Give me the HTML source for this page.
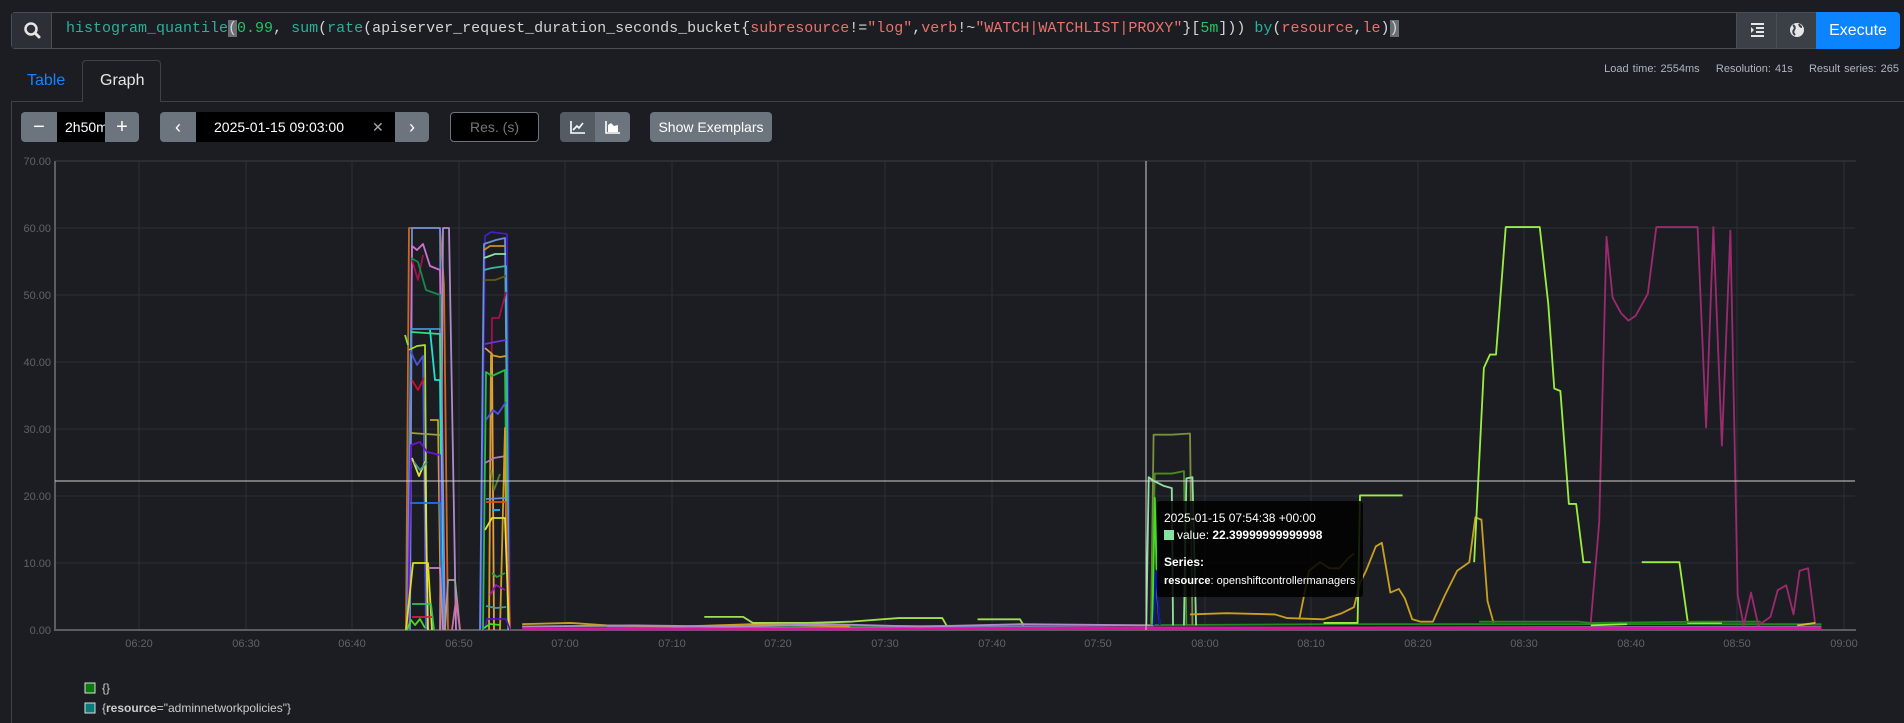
<!DOCTYPE html>
<html><head><meta charset="utf-8"><style>
*{box-sizing:border-box;margin:0;padding:0}
body{width:1904px;height:723px;background:#1b1d22;font-family:"Liberation Sans",sans-serif;overflow:hidden;position:relative;color:#e6e6e6}
.abs{position:absolute}
.q{left:11px;top:12px;width:1888px;height:37px;border:1px solid #4a4e55;border-radius:4px;background:#1b1d22}
.srch{left:0;top:0;width:40px;height:35px;background:#2c2f35;border-right:1px solid #4a4e55}
.qt{left:54px;top:7px;font-family:"Liberation Mono",monospace;font-size:15px;white-space:pre;color:#d4d4d4}
.f{color:#2bb09a}.n{color:#22c55e}.l{color:#e8736c}.cur{background:#6a6e75}
.btn{background:#6c757d;color:#fff;font-size:14px;display:flex;align-items:center;justify-content:center}
.tab{font-size:16px}
.ctl{top:112px;height:30px}
</style></head><body>
<div class="abs q">
 <div class="abs srch"><svg width="40" height="35"><circle cx="19" cy="16" r="5.5" fill="none" stroke="#e6e6e6" stroke-width="2.5"/><line x1="23" y1="20" x2="27" y2="24" stroke="#e6e6e6" stroke-width="3" stroke-linecap="round"/></svg></div>
 <div class="abs qt"><span class="f">histogram_quantile</span><span class="cur">(</span><span class="n">0.99</span>, <span class="f">sum</span>(<span class="f">rate</span>(apiserver_request_duration_seconds_bucket{<span class="l">subresource</span>!=<span class="l">"log"</span>,<span class="l">verb</span>!~<span class="l">"WATCH|WATCHLIST|PROXY"</span>}[<span class="n">5m</span>])) <span class="f">by</span>(<span class="l">resource</span>,<span class="l">le</span>)<span class="cur">)</span></div>
 <div class="abs" style="left:1724px;top:0;width:40px;height:35px;background:#3b3f46;border-left:1px solid #4a4e55"><svg width="40" height="35"><g stroke="#e6e6e6" stroke-width="2"><line x1="14" y1="11" x2="27" y2="11"/><line x1="19" y1="15" x2="27" y2="15"/><line x1="19" y1="19" x2="27" y2="19"/><line x1="14" y1="23" x2="27" y2="23"/></g><path d="M14 14 L17 17 L14 20Z" fill="#e6e6e6"/></svg></div>
 <div class="abs" style="left:1764px;top:0;width:40px;height:35px;background:#3b3f46;border-left:1px solid #4a4e55"><svg width="40" height="35"><circle cx="20" cy="17" r="7" fill="#e6e6e6"/><path d="M16 12 q3 2 1 5 q-2 2 1 5 M22 11 q1 3 3 3" stroke="#3b3f46" stroke-width="2" fill="none"/></svg></div>
 <div class="abs btn" style="left:1804px;top:-1px;width:84px;height:37px;background:#0b84ff;border-radius:0 4px 4px 0;font-size:16px">Execute</div>
</div>
<div class="abs tab" style="left:27px;top:72px;color:#1a82f7">Table</div>
<div class="abs" style="left:82px;top:60px;width:79px;height:42px;border:1px solid #3e4248;border-bottom:none;border-radius:4px 4px 0 0;background:#1b1d22;z-index:2"></div>
<div class="abs tab" style="left:100px;top:72px;color:#e6e6e6;z-index:3">Graph</div>
<div class="abs" style="left:11px;top:101px;width:1893px;height:1px;background:#3e4248"></div>
<div class="abs" style="left:11px;top:101px;width:1px;height:622px;background:#3e4248"></div>
<div class="abs" style="right:5px;top:63px;font-size:11px;color:#adb5bd;word-spacing:1px">Load time: 2554ms &nbsp;&nbsp; Resolution: 41s &nbsp;&nbsp; Result series: 265</div>

<div class="abs ctl btn" style="left:21px;width:36px;border-radius:4px 0 0 4px;font-size:20px">−</div>
<div class="abs ctl" style="left:57px;width:48px;background:#000;color:#fff;font-size:14px;padding:7px 0 0 8px;overflow:hidden">2h50m</div>
<div class="abs ctl btn" style="left:105px;width:34px;border-radius:0 4px 4px 0;font-size:20px">+</div>
<div class="abs ctl btn" style="left:160px;width:36px;border-radius:4px 0 0 4px;font-size:18px">‹</div>
<div class="abs ctl" style="left:196px;width:199px;background:#000;color:#fff;font-size:14px;padding:7px 0 0 18px">2025-01-15 09:03:00<span style="position:absolute;left:176px;color:#aaa">✕</span></div>
<div class="abs ctl btn" style="left:395px;width:34px;border-radius:0 4px 4px 0;font-size:18px">›</div>
<div class="abs ctl" style="left:450px;width:89px;background:#000;border:1px solid #6c757d;border-radius:4px;color:#777;font-size:14px;text-align:center;padding-top:6px">Res. (s)</div>
<div class="abs ctl btn" style="left:560px;width:35px;background:#545b62;border-radius:4px 0 0 4px"><svg width="16" height="14"><path d="M1 1V13H15" stroke="#fff" stroke-width="1.6" fill="none"/><path d="M3 10 L7 6 L9 8 L13 3" stroke="#fff" stroke-width="1.6" fill="none"/></svg></div>
<div class="abs ctl btn" style="left:595px;width:35px;border-radius:0 4px 4px 0"><svg width="16" height="14"><path d="M1 1V13H15" stroke="#fff" stroke-width="1.6" fill="none"/><path d="M3 12V5L6 3L9 6L13 5V12Z" fill="#fff"/></svg></div>
<div class="abs ctl btn" style="left:650px;width:122px;border-radius:4px">Show Exemplars</div>

<svg class="abs" style="left:0;top:0" width="1904" height="723">
 <g stroke="#2b2e34" stroke-width="1">
  <line x1="55" y1="228" x2="1855" y2="228"/><line x1="55" y1="295" x2="1855" y2="295"/><line x1="55" y1="362" x2="1855" y2="362"/><line x1="55" y1="429" x2="1855" y2="429"/><line x1="55" y1="496" x2="1855" y2="496"/><line x1="55" y1="563" x2="1855" y2="563"/>
  <line x1="139" y1="161" x2="139" y2="630"/><line x1="246" y1="161" x2="246" y2="630"/><line x1="352" y1="161" x2="352" y2="630"/><line x1="459" y1="161" x2="459" y2="630"/><line x1="565" y1="161" x2="565" y2="630"/><line x1="672" y1="161" x2="672" y2="630"/><line x1="778" y1="161" x2="778" y2="630"/><line x1="885" y1="161" x2="885" y2="630"/><line x1="992" y1="161" x2="992" y2="630"/><line x1="1098" y1="161" x2="1098" y2="630"/><line x1="1205" y1="161" x2="1205" y2="630"/><line x1="1311" y1="161" x2="1311" y2="630"/><line x1="1418" y1="161" x2="1418" y2="630"/><line x1="1524" y1="161" x2="1524" y2="630"/><line x1="1631" y1="161" x2="1631" y2="630"/><line x1="1737" y1="161" x2="1737" y2="630"/><line x1="1844" y1="161" x2="1844" y2="630"/>
 </g>
 <path d="M55 161V630H1856" stroke="#5a5d62" stroke-width="2" fill="none"/>
 <line x1="55" y1="161" x2="1856" y2="161" stroke="#3a3d42" stroke-width="1"/>
 <g font-family="Liberation Sans" font-size="11" fill="#5f6368" text-anchor="end">
  <text x="51" y="165">70.00</text><text x="51" y="232">60.00</text><text x="51" y="299">50.00</text><text x="51" y="366">40.00</text><text x="51" y="433">30.00</text><text x="51" y="500">20.00</text><text x="51" y="567">10.00</text><text x="51" y="634">0.00</text>
 </g>
 <g font-family="Liberation Sans" font-size="11" fill="#5f6368" text-anchor="middle">
  <text x="139" y="647">06:20</text><text x="246" y="647">06:30</text><text x="352" y="647">06:40</text><text x="459" y="647">06:50</text><text x="565" y="647">07:00</text><text x="672" y="647">07:10</text><text x="778" y="647">07:20</text><text x="885" y="647">07:30</text><text x="992" y="647">07:40</text><text x="1098" y="647">07:50</text><text x="1205" y="647">08:00</text><text x="1311" y="647">08:10</text><text x="1418" y="647">08:20</text><text x="1524" y="647">08:30</text><text x="1631" y="647">08:40</text><text x="1737" y="647">08:50</text><text x="1844" y="647">09:00</text>
 </g>
 <g fill="none" stroke-width="1.8" stroke-linejoin="round">
  <polyline stroke="#c86a1f" points="406,630 409,228 440,228 444,285 448,630"/>
  <polyline stroke="#6a8fd8" points="410,630 412,228 440,228 443,630"/>
  <polyline stroke="#b08ac8" points="440,630 443,228 449,228 456,630"/>
  <polyline stroke="#d070d0" points="408,630 412,246 417,250 423,244 430,266 440,270 445,630"/>
  <polyline stroke="#a0124a" points="412,260 418,280 423,255"/>
  <polyline stroke="#138a4a" points="411,258 418,262 426,290 440,295 442,630"/>
  <polyline stroke="#4a90d8" points="407,630 411,329 440,329 444,630"/>
  <polyline stroke="#30e080" points="411,332 440,334 443,630"/>
  <polyline stroke="#a8e030" points="409,350 417,346 425,345 427,630"/>
  <polyline stroke="#5050e0" points="410,350 417,365 423,356 426,630"/>
  <polyline stroke="#d01020" points="412,380 418,390 424,378"/>
  <polyline stroke="#20e0d0" points="430,330 435,380 440,380 443,630"/>
  <polyline stroke="#c8a020" points="430,420 438,420 441,630"/>
  <polyline stroke="#9aa040" points="411,433 440,435"/>
  <polyline stroke="#7010d0" points="408,630 411,445 420,442 427,452 440,455 442,630"/>
  <polyline stroke="#e0e040" points="412,458 419,476 425,462 428,630"/>
  <polyline stroke="#3a9aa0" points="414,462 420,470 427,462"/>
  <polyline stroke="#2070f0" points="410,503 440,503 443,630"/>
  <polyline stroke="#e0e010" points="406,630 413,563 428,563 432,630"/>
  <polyline stroke="#d080c0" points="428,568 440,568 443,630"/>
  <polyline stroke="#30c060" points="412,604 431,604 434,630"/>
  <polyline stroke="#d02040" points="412,617 432,617"/>
  <polyline stroke="#40e020" points="407,630 411,620 415,625 420,619 425,628"/>
  <polyline stroke="#a0a0a0" points="445,630 448,580 455,580 460,630"/>
  <polyline stroke="#d070a0" points="452,630 456,600 460,630"/>
  <polyline stroke="#88e040" points="405,335 408,345"/>
  <polyline stroke="#4020c0" points="481,630 485,236 491,232 507,234 510,630"/>
  <polyline stroke="#6a8fd8" points="480,630 484,244 496,240 505,238 509,630"/>
  <polyline stroke="#c89020" points="484,250 490,246 505,246"/>
  <polyline stroke="#90e0a0" points="484,258 495,254 506,254"/>
  <polyline stroke="#40b0b0" points="484,270 492,268 506,266 509,630"/>
  <polyline stroke="#605a10" points="484,280 495,280 506,276"/>
  <polyline stroke="#a0124a" points="489,630 492,318 499,318 506,292"/>
  <polyline stroke="#7030e0" points="485,344 495,342 506,340"/>
  <polyline stroke="#e0a040" points="485,348 492,354 494,630"/>
  <polyline stroke="#d0a020" points="489,630 491,355 500,357 506,356"/>
  <polyline stroke="#20c040" points="483,630 486,372 492,376 505,370 508,630"/>
  <polyline stroke="#5050e0" points="486,420 493,410 498,414 506,402"/>
  <polyline stroke="#b080b0" points="485,463 494,458 506,456"/>
  <polyline stroke="#508020" points="491,470 494,490 500,474"/>
  <polyline stroke="#d0a020" points="500,630 505,428 506,520"/>
  <polyline stroke="#6a8fd8" points="486,499 506,498"/>
  <polyline stroke="#e05010" points="486,502 506,502 510,630"/>
  <polyline stroke="#20b0f0" points="492,510 500,510"/>
  <polyline stroke="#e0e040" points="485,530 492,518 505,518 509,630"/>
  <polyline stroke="#30a040" points="492,573 497,577 505,573"/>
  <polyline stroke="#a010c0" points="490,595 496,585 505,590"/>
  <polyline stroke="#40a0a0" points="486,606 496,608 506,607"/>
  <polyline stroke="#5010d0" points="485,630 487,619 506,619 510,630"/>
  <polyline stroke="#40e020" points="484,628 490,624 500,625"/>
 </g>
 <g transform="scale(1.2143)" fill="none" stroke-width="1.5" stroke-linejoin="round">
  <polyline stroke="#1e8a1e" points="430,516 600,516 900,515 1100,514 1500,514"/>
  <polyline stroke="#7080b0" points="500,516 700,517 800,516 1000,517 1500,516"/>
  <polyline stroke="#c8a020" points="430,514 470,513 500,515 560,516 620,514 700,516"/>
  <polyline stroke="#a0e050" points="580,508 612,508 620,513 665,513 700,512 740,509 776,509 780,516"/>
  <polyline stroke="#a0e050" points="805,510 840,510 843,515"/>
  <polyline stroke="#b08ac8" points="430,516 520,515 600,516 680,514 760,516 840,514 950,515"/>
  <polyline stroke="#7a8e40" points="948,512 950,358 965,358 980,357 982,515"/>
  <polyline stroke="#4a8a20" points="948,515 951,390 965,390 975,388 977,515"/>
  <polyline stroke="#90e0a0" points="944,515 946,393 950,396 958,400 965,402 966,515"/>
  <polyline stroke="#90e0a0" points="975,515 977,394 982,393 985,515"/>
  <polyline stroke="#40e020" points="949,515 951,410 953,490 955,515"/>
  <polyline stroke="#1010c0" points="950,515 952,470 955,515"/>
  <polyline stroke="#c8a020" points="980,506 1010,505 1050,506 1060,509 1090,510 1105,505 1115,500 1120,480 1125,470 1133,450 1138,447 1145,488 1152,485 1157,493 1163,510 1170,512 1180,512 1190,490 1200,470 1210,463 1215,426 1220,428 1225,495 1230,513"/>
  <polyline stroke="#c8a020" points="1070,510 1078,470 1087,463 1095,468 1103,468 1110,460 1115,456"/>
  <polyline stroke="#9aee40" points="1090,513 1118,513 1120,408 1155,408"/>
  <polyline stroke="#9aee40" points="1214,463 1222,303 1227,292 1232,292 1240,187 1268,187 1275,250 1280,320 1285,322 1292,415 1298,415 1304,463 1310,463"/>
  <polyline stroke="#9aee40" points="1310,515 1340,514"/>
  <polyline stroke="#9aee40" points="1352,463 1383,463 1390,513 1418,513"/>
  <polyline stroke="#1e8a1e" points="1218,512 1300,512 1310,513 1400,512 1450,512"/>
  <polyline stroke="#9b2a6e" points="1310,513 1317,430 1323,195 1328,245 1335,258 1341,264 1347,260 1357,242 1364,187 1398,187 1405,352 1411,187 1418,367 1425,190 1431,490 1436,515 1442,488 1448,515 1458,508 1464,486 1471,482 1477,506 1482,470 1489,468 1495,515"/>
  <polyline stroke="#e010a0" points="430,518 700,518 900,517 1500,517" stroke-width="2"/>
  <polyline stroke="#d0c020" points="1480,515 1495,513"/>
 </g>
 <line x1="1146" y1="161" x2="1146" y2="630" stroke="#d0d0d0" stroke-width="1"/>
 <line x1="55" y1="481" x2="1855" y2="481" stroke="#d0d0d0" stroke-width="1"/>
 <rect x="1157" y="501" width="206" height="96" rx="3" fill="#000" fill-opacity="0.85"/>
 <g font-family="Liberation Sans" font-size="12" fill="#fff">
  <text x="1164" y="522">2025-01-15 07:54:38 +00:00</text>
  <rect x="1164" y="530" width="10" height="10" fill="#86e0a0"/>
  <text x="1177" y="539">value: <tspan font-weight="bold">22.39999999999998</tspan></text>
  <text x="1164" y="566" font-weight="bold">Series:</text>
  <text x="1164" y="584" font-size="11"><tspan font-weight="bold">resource</tspan>: openshiftcontrollermanagers</text>
 </g>
 <rect x="85" y="683" width="10" height="10" fill="#0a7a0a" stroke="#ddd" stroke-width="1"/>
 <rect x="85" y="703" width="10" height="10" fill="#0a7a7a" stroke="#ddd" stroke-width="1"/>
 <g font-family="Liberation Sans" font-size="12" fill="#ccc">
  <text x="102" y="692">{}</text>
  <text x="102" y="712">{<tspan font-weight="bold">resource</tspan>="adminnetworkpolicies"}</text>
 </g>
</svg>
</body></html>
